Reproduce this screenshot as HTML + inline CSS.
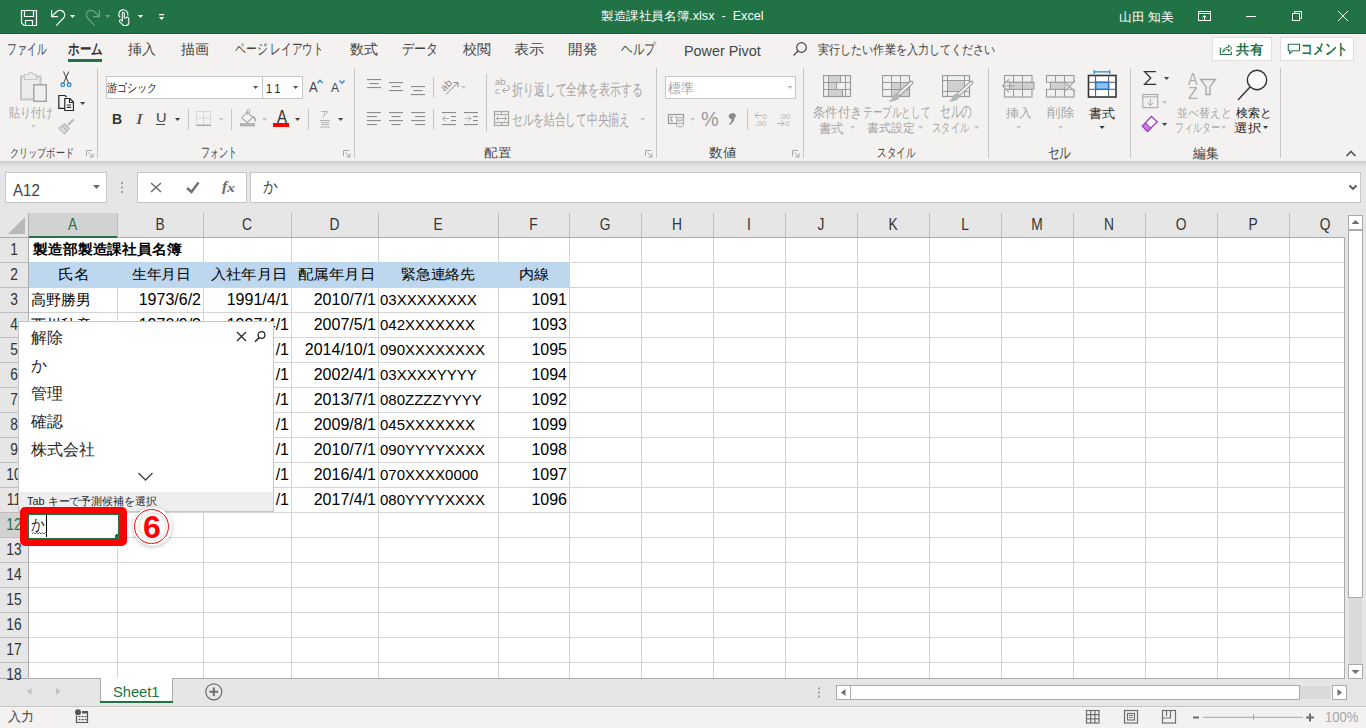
<!DOCTYPE html>
<html><head><meta charset="utf-8"><title>Excel</title>
<style>
html,body{margin:0;padding:0;}
body{width:1366px;height:728px;position:relative;overflow:hidden;background:#ffffff;font-family:"Liberation Sans", sans-serif;}
</style></head><body>
<div style="position:absolute;left:0px;top:0px;width:1366px;height:33px;background:#217346;"></div>
<div style="position:absolute;left:0px;top:33px;width:1366px;height:1px;background:#155c33;"></div>
<div style="position:absolute;left:0px;top:34px;width:1366px;height:1px;background:#fbfbfb;"></div>
<div style="position:absolute;left:0px;top:35px;width:1366px;height:126px;background:#f3f2f1;"></div>
<div style="position:absolute;left:0;top:161px;width:1366px;height:6px;background:linear-gradient(#cdcdcd,#e6e6e6)"></div>
<div style="position:absolute;left:0px;top:167px;width:1366px;height:46px;background:#e6e6e6;"></div>
<div style="position:absolute;left:0px;top:213px;width:1366px;height:24px;background:#e6e6e6;"></div>
<div style="position:absolute;left:0px;top:237px;width:28px;height:441px;background:#e6e6e6;"></div>
<div style="position:absolute;left:29px;top:238px;width:1315px;height:440px;background:#ffffff;"></div>
<div style="position:absolute;left:0px;top:678px;width:1366px;height:28px;background:#e6e6e6;"></div>
<div style="position:absolute;left:0px;top:707px;width:1366px;height:21px;background:#f3f2f1;"></div>
<div style="position:absolute;left:1345px;top:213px;width:21px;height:465px;background:#e6e6e6;"></div>
<div style="position:absolute;left:29px;top:213px;width:88px;height:24px;background:#d2d2d2;"></div>
<div style="position:absolute;left:0px;top:513px;width:28px;height:24px;background:#d2d2d2;"></div>
<div style="position:absolute;left:29px;top:262px;width:1315px;height:1px;background:#d4d4d4;"></div>
<div style="position:absolute;left:0px;top:262px;width:28px;height:1px;background:#bdbdbd;"></div>
<div style="position:absolute;left:29px;top:287px;width:1315px;height:1px;background:#d4d4d4;"></div>
<div style="position:absolute;left:0px;top:287px;width:28px;height:1px;background:#bdbdbd;"></div>
<div style="position:absolute;left:29px;top:312px;width:1315px;height:1px;background:#d4d4d4;"></div>
<div style="position:absolute;left:0px;top:312px;width:28px;height:1px;background:#bdbdbd;"></div>
<div style="position:absolute;left:29px;top:337px;width:1315px;height:1px;background:#d4d4d4;"></div>
<div style="position:absolute;left:0px;top:337px;width:28px;height:1px;background:#bdbdbd;"></div>
<div style="position:absolute;left:29px;top:362px;width:1315px;height:1px;background:#d4d4d4;"></div>
<div style="position:absolute;left:0px;top:362px;width:28px;height:1px;background:#bdbdbd;"></div>
<div style="position:absolute;left:29px;top:387px;width:1315px;height:1px;background:#d4d4d4;"></div>
<div style="position:absolute;left:0px;top:387px;width:28px;height:1px;background:#bdbdbd;"></div>
<div style="position:absolute;left:29px;top:412px;width:1315px;height:1px;background:#d4d4d4;"></div>
<div style="position:absolute;left:0px;top:412px;width:28px;height:1px;background:#bdbdbd;"></div>
<div style="position:absolute;left:29px;top:437px;width:1315px;height:1px;background:#d4d4d4;"></div>
<div style="position:absolute;left:0px;top:437px;width:28px;height:1px;background:#bdbdbd;"></div>
<div style="position:absolute;left:29px;top:462px;width:1315px;height:1px;background:#d4d4d4;"></div>
<div style="position:absolute;left:0px;top:462px;width:28px;height:1px;background:#bdbdbd;"></div>
<div style="position:absolute;left:29px;top:487px;width:1315px;height:1px;background:#d4d4d4;"></div>
<div style="position:absolute;left:0px;top:487px;width:28px;height:1px;background:#bdbdbd;"></div>
<div style="position:absolute;left:29px;top:512px;width:1315px;height:1px;background:#d4d4d4;"></div>
<div style="position:absolute;left:0px;top:512px;width:28px;height:1px;background:#bdbdbd;"></div>
<div style="position:absolute;left:29px;top:537px;width:1315px;height:1px;background:#d4d4d4;"></div>
<div style="position:absolute;left:0px;top:537px;width:28px;height:1px;background:#bdbdbd;"></div>
<div style="position:absolute;left:29px;top:562px;width:1315px;height:1px;background:#d4d4d4;"></div>
<div style="position:absolute;left:0px;top:562px;width:28px;height:1px;background:#bdbdbd;"></div>
<div style="position:absolute;left:29px;top:587px;width:1315px;height:1px;background:#d4d4d4;"></div>
<div style="position:absolute;left:0px;top:587px;width:28px;height:1px;background:#bdbdbd;"></div>
<div style="position:absolute;left:29px;top:612px;width:1315px;height:1px;background:#d4d4d4;"></div>
<div style="position:absolute;left:0px;top:612px;width:28px;height:1px;background:#bdbdbd;"></div>
<div style="position:absolute;left:29px;top:637px;width:1315px;height:1px;background:#d4d4d4;"></div>
<div style="position:absolute;left:0px;top:637px;width:28px;height:1px;background:#bdbdbd;"></div>
<div style="position:absolute;left:29px;top:662px;width:1315px;height:1px;background:#d4d4d4;"></div>
<div style="position:absolute;left:0px;top:662px;width:28px;height:1px;background:#bdbdbd;"></div>
<div style="position:absolute;left:117px;top:238px;width:1px;height:440px;background:#d4d4d4;"></div>
<div style="position:absolute;left:117px;top:213px;width:1px;height:24px;background:#bdbdbd;"></div>
<div style="position:absolute;left:203px;top:238px;width:1px;height:440px;background:#d4d4d4;"></div>
<div style="position:absolute;left:203px;top:213px;width:1px;height:24px;background:#bdbdbd;"></div>
<div style="position:absolute;left:291px;top:238px;width:1px;height:440px;background:#d4d4d4;"></div>
<div style="position:absolute;left:291px;top:213px;width:1px;height:24px;background:#bdbdbd;"></div>
<div style="position:absolute;left:378px;top:238px;width:1px;height:440px;background:#d4d4d4;"></div>
<div style="position:absolute;left:378px;top:213px;width:1px;height:24px;background:#bdbdbd;"></div>
<div style="position:absolute;left:498px;top:238px;width:1px;height:440px;background:#d4d4d4;"></div>
<div style="position:absolute;left:498px;top:213px;width:1px;height:24px;background:#bdbdbd;"></div>
<div style="position:absolute;left:569px;top:238px;width:1px;height:440px;background:#d4d4d4;"></div>
<div style="position:absolute;left:569px;top:213px;width:1px;height:24px;background:#bdbdbd;"></div>
<div style="position:absolute;left:641px;top:238px;width:1px;height:440px;background:#d4d4d4;"></div>
<div style="position:absolute;left:641px;top:213px;width:1px;height:24px;background:#bdbdbd;"></div>
<div style="position:absolute;left:713px;top:238px;width:1px;height:440px;background:#d4d4d4;"></div>
<div style="position:absolute;left:713px;top:213px;width:1px;height:24px;background:#bdbdbd;"></div>
<div style="position:absolute;left:785px;top:238px;width:1px;height:440px;background:#d4d4d4;"></div>
<div style="position:absolute;left:785px;top:213px;width:1px;height:24px;background:#bdbdbd;"></div>
<div style="position:absolute;left:857px;top:238px;width:1px;height:440px;background:#d4d4d4;"></div>
<div style="position:absolute;left:857px;top:213px;width:1px;height:24px;background:#bdbdbd;"></div>
<div style="position:absolute;left:929px;top:238px;width:1px;height:440px;background:#d4d4d4;"></div>
<div style="position:absolute;left:929px;top:213px;width:1px;height:24px;background:#bdbdbd;"></div>
<div style="position:absolute;left:1001px;top:238px;width:1px;height:440px;background:#d4d4d4;"></div>
<div style="position:absolute;left:1001px;top:213px;width:1px;height:24px;background:#bdbdbd;"></div>
<div style="position:absolute;left:1073px;top:238px;width:1px;height:440px;background:#d4d4d4;"></div>
<div style="position:absolute;left:1073px;top:213px;width:1px;height:24px;background:#bdbdbd;"></div>
<div style="position:absolute;left:1145px;top:238px;width:1px;height:440px;background:#d4d4d4;"></div>
<div style="position:absolute;left:1145px;top:213px;width:1px;height:24px;background:#bdbdbd;"></div>
<div style="position:absolute;left:1217px;top:238px;width:1px;height:440px;background:#d4d4d4;"></div>
<div style="position:absolute;left:1217px;top:213px;width:1px;height:24px;background:#bdbdbd;"></div>
<div style="position:absolute;left:1289px;top:238px;width:1px;height:440px;background:#d4d4d4;"></div>
<div style="position:absolute;left:1289px;top:213px;width:1px;height:24px;background:#bdbdbd;"></div>
<div style="position:absolute;left:1212px;top:37px;width:58px;height:22px;background:#ffffff;border:1px solid #e1dfdd;"></div>
<div style="position:absolute;left:1280px;top:37px;width:72px;height:22px;background:#ffffff;border:1px solid #e1dfdd;"></div>
<div style="position:absolute;left:97px;top:68px;width:1px;height:90px;background:#c8c6c4;"></div>
<div style="position:absolute;left:354px;top:68px;width:1px;height:90px;background:#c8c6c4;"></div>
<div style="position:absolute;left:656px;top:68px;width:1px;height:90px;background:#c8c6c4;"></div>
<div style="position:absolute;left:803px;top:68px;width:1px;height:90px;background:#c8c6c4;"></div>
<div style="position:absolute;left:988px;top:68px;width:1px;height:90px;background:#c8c6c4;"></div>
<div style="position:absolute;left:1130px;top:68px;width:1px;height:90px;background:#c8c6c4;"></div>
<div style="position:absolute;left:1280px;top:68px;width:1px;height:90px;background:#c8c6c4;"></div>
<div style="position:absolute;left:106px;top:76px;width:155px;height:21px;background:#ffffff;border:1px solid #c6c6c6;"></div>
<div style="position:absolute;left:262px;top:76px;width:39px;height:21px;background:#ffffff;border:1px solid #c6c6c6;"></div>
<div style="position:absolute;left:665px;top:76px;width:129px;height:21px;background:#ffffff;border:1px solid #c6c6c6;"></div>
<div style="position:absolute;left:5px;top:172px;width:100px;height:29px;background:#ffffff;border:1px solid #c6c6c6;"></div>
<div style="position:absolute;left:137px;top:172px;width:108px;height:29px;background:#ffffff;border:1px solid #c6c6c6;"></div>
<div style="position:absolute;left:250px;top:172px;width:1109px;height:29px;background:#ffffff;border:1px solid #c6c6c6;"></div>
<svg style="position:absolute;left:8px;top:217px" width="18" height="18" viewBox="0 0 18 18"><polygon points="17,0 17,17 0,17" fill="#b8b8b8"/></svg>
<div style="position:absolute;left:28px;top:213px;width:1px;height:465px;background:#ababab;"></div>
<div style="position:absolute;left:0px;top:237px;width:1344px;height:1px;background:#ababab;"></div>
<div style="position:absolute;left:1344px;top:237px;width:1px;height:441px;background:#ababab;"></div>
<div style="position:absolute;left:29px;top:262px;width:540px;height:25px;background:#bdd7ee;"></div>
<div style="position:absolute;left:0px;top:678px;width:1345px;height:1px;background:#ababab;"></div>
<div style="position:absolute;left:0px;top:706px;width:1366px;height:1px;background:#c6c6c6;"></div>
<div style="position:absolute;left:1348px;top:215px;width:13px;height:13px;background:#ffffff;border:1px solid #ababab;"></div>
<div style="position:absolute;left:1348px;top:230px;width:13px;height:366px;background:#ffffff;border:1px solid #ababab;"></div>
<div style="position:absolute;left:1349px;top:598px;width:13px;height:66px;background:#dadada;"></div>
<div style="position:absolute;left:1348px;top:664px;width:13px;height:13px;background:#ffffff;border:1px solid #ababab;"></div>
<div style="position:absolute;left:836px;top:685px;width:13px;height:13px;background:#ffffff;border:1px solid #ababab;"></div>
<div style="position:absolute;left:850px;top:685px;width:448px;height:13px;background:#ffffff;border:1px solid #ababab;"></div>
<div style="position:absolute;left:1300px;top:686px;width:30px;height:13px;background:#dadada;"></div>
<div style="position:absolute;left:1332px;top:685px;width:13px;height:13px;background:#ffffff;border:1px solid #ababab;"></div>
<div style="position:absolute;left:188px;top:109px;width:1px;height:21px;background:#c8c6c4;"></div>
<div style="position:absolute;left:231px;top:109px;width:1px;height:21px;background:#c8c6c4;"></div>
<div style="position:absolute;left:308px;top:109px;width:1px;height:21px;background:#c8c6c4;"></div>
<div style="position:absolute;left:433px;top:77px;width:1px;height:21px;background:#c8c6c4;"></div>
<div style="position:absolute;left:433px;top:109px;width:1px;height:21px;background:#c8c6c4;"></div>
<div style="position:absolute;left:486px;top:74px;width:1px;height:58px;background:#c8c6c4;"></div>
<div style="position:absolute;left:747px;top:109px;width:1px;height:21px;background:#c8c6c4;"></div>
<div style="position:absolute;left:117px;top:238px;width:86px;height:24px;background:#ffffff;"></div>
<div style="position:absolute;left:68px;top:59px;width:34px;height:3px;background:#217346;"></div>
<div style="position:absolute;left:29px;top:236px;width:88px;height:2px;background:#217346;"></div>
<div style="position:absolute;left:26px;top:513px;width:2px;height:24px;background:#217346;"></div>
<div style="position:absolute;left:31px;top:287px;height:25px;line-height:26px;font-size:15px;color:#000;white-space:pre;font-family:'Liberation Sans', sans-serif">高野勝男</div>
<div style="position:absolute;left:117px;top:287px;width:84px;height:25px;line-height:26px;text-align:right;font-size:16px;color:#000;white-space:pre;font-family:'Liberation Sans', sans-serif">1973/6/2</div>
<div style="position:absolute;left:203px;top:287px;width:86px;height:25px;line-height:26px;text-align:right;font-size:16px;color:#000;white-space:pre;font-family:'Liberation Sans', sans-serif">1991/4/1</div>
<div style="position:absolute;left:291px;top:287px;width:85px;height:25px;line-height:26px;text-align:right;font-size:16px;color:#000;white-space:pre;font-family:'Liberation Sans', sans-serif">2010/7/1</div>
<div style="position:absolute;left:380px;top:287px;height:25px;line-height:26px;font-size:15px;color:#000;white-space:pre;font-family:'Liberation Sans', sans-serif">03XXXXXXXX</div>
<div style="position:absolute;left:498px;top:287px;width:69px;height:25px;line-height:26px;text-align:right;font-size:16px;color:#000;white-space:pre;font-family:'Liberation Sans', sans-serif">1091</div>
<div style="position:absolute;left:31px;top:312px;height:25px;line-height:26px;font-size:15px;color:#000;white-space:pre;font-family:'Liberation Sans', sans-serif">西川秋彦</div>
<div style="position:absolute;left:117px;top:312px;width:84px;height:25px;line-height:26px;text-align:right;font-size:16px;color:#000;white-space:pre;font-family:'Liberation Sans', sans-serif">1970/9/3</div>
<div style="position:absolute;left:203px;top:312px;width:86px;height:25px;line-height:26px;text-align:right;font-size:16px;color:#000;white-space:pre;font-family:'Liberation Sans', sans-serif">1997/4/1</div>
<div style="position:absolute;left:291px;top:312px;width:85px;height:25px;line-height:26px;text-align:right;font-size:16px;color:#000;white-space:pre;font-family:'Liberation Sans', sans-serif">2007/5/1</div>
<div style="position:absolute;left:380px;top:312px;height:25px;line-height:26px;font-size:15px;color:#000;white-space:pre;font-family:'Liberation Sans', sans-serif">042XXXXXXX</div>
<div style="position:absolute;left:498px;top:312px;width:69px;height:25px;line-height:26px;text-align:right;font-size:16px;color:#000;white-space:pre;font-family:'Liberation Sans', sans-serif">1093</div>
<div style="position:absolute;left:203px;top:337px;width:86px;height:25px;line-height:26px;text-align:right;font-size:16px;color:#000;white-space:pre;font-family:'Liberation Sans', sans-serif">/1</div>
<div style="position:absolute;left:291px;top:337px;width:85px;height:25px;line-height:26px;text-align:right;font-size:16px;color:#000;white-space:pre;font-family:'Liberation Sans', sans-serif">2014/10/1</div>
<div style="position:absolute;left:380px;top:337px;height:25px;line-height:26px;font-size:15px;color:#000;white-space:pre;font-family:'Liberation Sans', sans-serif">090XXXXXXXX</div>
<div style="position:absolute;left:498px;top:337px;width:69px;height:25px;line-height:26px;text-align:right;font-size:16px;color:#000;white-space:pre;font-family:'Liberation Sans', sans-serif">1095</div>
<div style="position:absolute;left:203px;top:362px;width:86px;height:25px;line-height:26px;text-align:right;font-size:16px;color:#000;white-space:pre;font-family:'Liberation Sans', sans-serif">/1</div>
<div style="position:absolute;left:291px;top:362px;width:85px;height:25px;line-height:26px;text-align:right;font-size:16px;color:#000;white-space:pre;font-family:'Liberation Sans', sans-serif">2002/4/1</div>
<div style="position:absolute;left:380px;top:362px;height:25px;line-height:26px;font-size:15px;color:#000;white-space:pre;font-family:'Liberation Sans', sans-serif">03XXXXYYYY</div>
<div style="position:absolute;left:498px;top:362px;width:69px;height:25px;line-height:26px;text-align:right;font-size:16px;color:#000;white-space:pre;font-family:'Liberation Sans', sans-serif">1094</div>
<div style="position:absolute;left:203px;top:387px;width:86px;height:25px;line-height:26px;text-align:right;font-size:16px;color:#000;white-space:pre;font-family:'Liberation Sans', sans-serif">/1</div>
<div style="position:absolute;left:291px;top:387px;width:85px;height:25px;line-height:26px;text-align:right;font-size:16px;color:#000;white-space:pre;font-family:'Liberation Sans', sans-serif">2013/7/1</div>
<div style="position:absolute;left:380px;top:387px;height:25px;line-height:26px;font-size:15px;color:#000;white-space:pre;font-family:'Liberation Sans', sans-serif">080ZZZZYYYY</div>
<div style="position:absolute;left:498px;top:387px;width:69px;height:25px;line-height:26px;text-align:right;font-size:16px;color:#000;white-space:pre;font-family:'Liberation Sans', sans-serif">1092</div>
<div style="position:absolute;left:203px;top:412px;width:86px;height:25px;line-height:26px;text-align:right;font-size:16px;color:#000;white-space:pre;font-family:'Liberation Sans', sans-serif">/1</div>
<div style="position:absolute;left:291px;top:412px;width:85px;height:25px;line-height:26px;text-align:right;font-size:16px;color:#000;white-space:pre;font-family:'Liberation Sans', sans-serif">2009/8/1</div>
<div style="position:absolute;left:380px;top:412px;height:25px;line-height:26px;font-size:15px;color:#000;white-space:pre;font-family:'Liberation Sans', sans-serif">045XXXXXXX</div>
<div style="position:absolute;left:498px;top:412px;width:69px;height:25px;line-height:26px;text-align:right;font-size:16px;color:#000;white-space:pre;font-family:'Liberation Sans', sans-serif">1099</div>
<div style="position:absolute;left:203px;top:437px;width:86px;height:25px;line-height:26px;text-align:right;font-size:16px;color:#000;white-space:pre;font-family:'Liberation Sans', sans-serif">/1</div>
<div style="position:absolute;left:291px;top:437px;width:85px;height:25px;line-height:26px;text-align:right;font-size:16px;color:#000;white-space:pre;font-family:'Liberation Sans', sans-serif">2010/7/1</div>
<div style="position:absolute;left:380px;top:437px;height:25px;line-height:26px;font-size:15px;color:#000;white-space:pre;font-family:'Liberation Sans', sans-serif">090YYYYXXXX</div>
<div style="position:absolute;left:498px;top:437px;width:69px;height:25px;line-height:26px;text-align:right;font-size:16px;color:#000;white-space:pre;font-family:'Liberation Sans', sans-serif">1098</div>
<div style="position:absolute;left:203px;top:462px;width:86px;height:25px;line-height:26px;text-align:right;font-size:16px;color:#000;white-space:pre;font-family:'Liberation Sans', sans-serif">/1</div>
<div style="position:absolute;left:291px;top:462px;width:85px;height:25px;line-height:26px;text-align:right;font-size:16px;color:#000;white-space:pre;font-family:'Liberation Sans', sans-serif">2016/4/1</div>
<div style="position:absolute;left:380px;top:462px;height:25px;line-height:26px;font-size:15px;color:#000;white-space:pre;font-family:'Liberation Sans', sans-serif">070XXXX0000</div>
<div style="position:absolute;left:498px;top:462px;width:69px;height:25px;line-height:26px;text-align:right;font-size:16px;color:#000;white-space:pre;font-family:'Liberation Sans', sans-serif">1097</div>
<div style="position:absolute;left:203px;top:487px;width:86px;height:25px;line-height:26px;text-align:right;font-size:16px;color:#000;white-space:pre;font-family:'Liberation Sans', sans-serif">/1</div>
<div style="position:absolute;left:291px;top:487px;width:85px;height:25px;line-height:26px;text-align:right;font-size:16px;color:#000;white-space:pre;font-family:'Liberation Sans', sans-serif">2017/4/1</div>
<div style="position:absolute;left:380px;top:487px;height:25px;line-height:26px;font-size:15px;color:#000;white-space:pre;font-family:'Liberation Sans', sans-serif">080YYYYXXXX</div>
<div style="position:absolute;left:498px;top:487px;width:69px;height:25px;line-height:26px;text-align:right;font-size:16px;color:#000;white-space:pre;font-family:'Liberation Sans', sans-serif">1096</div>
<div style="position:absolute;left:100px;top:678px;width:71px;height:23px;background:#fff;border-left:1px solid #ababab;border-right:1px solid #ababab"></div>
<div style="position:absolute;left:28px;top:213px;width:89px;height:24px;line-height:23px;text-align:center;font-size:16px;color:#217346;font-family:'Liberation Sans', sans-serif;transform:scaleX(0.86)">A</div>
<div style="position:absolute;left:117px;top:213px;width:86px;height:24px;line-height:23px;text-align:center;font-size:16px;color:#333333;font-family:'Liberation Sans', sans-serif;transform:scaleX(0.86)">B</div>
<div style="position:absolute;left:203px;top:213px;width:88px;height:24px;line-height:23px;text-align:center;font-size:16px;color:#333333;font-family:'Liberation Sans', sans-serif;transform:scaleX(0.86)">C</div>
<div style="position:absolute;left:291px;top:213px;width:87px;height:24px;line-height:23px;text-align:center;font-size:16px;color:#333333;font-family:'Liberation Sans', sans-serif;transform:scaleX(0.86)">D</div>
<div style="position:absolute;left:378px;top:213px;width:120px;height:24px;line-height:23px;text-align:center;font-size:16px;color:#333333;font-family:'Liberation Sans', sans-serif;transform:scaleX(0.86)">E</div>
<div style="position:absolute;left:498px;top:213px;width:71px;height:24px;line-height:23px;text-align:center;font-size:16px;color:#333333;font-family:'Liberation Sans', sans-serif;transform:scaleX(0.86)">F</div>
<div style="position:absolute;left:569px;top:213px;width:72px;height:24px;line-height:23px;text-align:center;font-size:16px;color:#333333;font-family:'Liberation Sans', sans-serif;transform:scaleX(0.86)">G</div>
<div style="position:absolute;left:641px;top:213px;width:72px;height:24px;line-height:23px;text-align:center;font-size:16px;color:#333333;font-family:'Liberation Sans', sans-serif;transform:scaleX(0.86)">H</div>
<div style="position:absolute;left:713px;top:213px;width:72px;height:24px;line-height:23px;text-align:center;font-size:16px;color:#333333;font-family:'Liberation Sans', sans-serif;transform:scaleX(0.86)">I</div>
<div style="position:absolute;left:785px;top:213px;width:72px;height:24px;line-height:23px;text-align:center;font-size:16px;color:#333333;font-family:'Liberation Sans', sans-serif;transform:scaleX(0.86)">J</div>
<div style="position:absolute;left:857px;top:213px;width:72px;height:24px;line-height:23px;text-align:center;font-size:16px;color:#333333;font-family:'Liberation Sans', sans-serif;transform:scaleX(0.86)">K</div>
<div style="position:absolute;left:929px;top:213px;width:72px;height:24px;line-height:23px;text-align:center;font-size:16px;color:#333333;font-family:'Liberation Sans', sans-serif;transform:scaleX(0.86)">L</div>
<div style="position:absolute;left:1001px;top:213px;width:72px;height:24px;line-height:23px;text-align:center;font-size:16px;color:#333333;font-family:'Liberation Sans', sans-serif;transform:scaleX(0.86)">M</div>
<div style="position:absolute;left:1073px;top:213px;width:72px;height:24px;line-height:23px;text-align:center;font-size:16px;color:#333333;font-family:'Liberation Sans', sans-serif;transform:scaleX(0.86)">N</div>
<div style="position:absolute;left:1145px;top:213px;width:72px;height:24px;line-height:23px;text-align:center;font-size:16px;color:#333333;font-family:'Liberation Sans', sans-serif;transform:scaleX(0.86)">O</div>
<div style="position:absolute;left:1217px;top:213px;width:72px;height:24px;line-height:23px;text-align:center;font-size:16px;color:#333333;font-family:'Liberation Sans', sans-serif;transform:scaleX(0.86)">P</div>
<div style="position:absolute;left:1289px;top:213px;width:72px;height:24px;line-height:23px;text-align:center;font-size:16px;color:#333333;font-family:'Liberation Sans', sans-serif;transform:scaleX(0.86)">Q</div>
<div style="position:absolute;left:0px;top:237px;width:28px;height:25px;line-height:26px;text-align:center;font-size:16px;color:#333333;font-family:'Liberation Sans', sans-serif;transform:scaleX(0.86)">1</div>
<div style="position:absolute;left:0px;top:262px;width:28px;height:25px;line-height:26px;text-align:center;font-size:16px;color:#333333;font-family:'Liberation Sans', sans-serif;transform:scaleX(0.86)">2</div>
<div style="position:absolute;left:0px;top:287px;width:28px;height:25px;line-height:26px;text-align:center;font-size:16px;color:#333333;font-family:'Liberation Sans', sans-serif;transform:scaleX(0.86)">3</div>
<div style="position:absolute;left:0px;top:312px;width:28px;height:25px;line-height:26px;text-align:center;font-size:16px;color:#333333;font-family:'Liberation Sans', sans-serif;transform:scaleX(0.86)">4</div>
<div style="position:absolute;left:0px;top:337px;width:28px;height:25px;line-height:26px;text-align:center;font-size:16px;color:#333333;font-family:'Liberation Sans', sans-serif;transform:scaleX(0.86)">5</div>
<div style="position:absolute;left:0px;top:362px;width:28px;height:25px;line-height:26px;text-align:center;font-size:16px;color:#333333;font-family:'Liberation Sans', sans-serif;transform:scaleX(0.86)">6</div>
<div style="position:absolute;left:0px;top:387px;width:28px;height:25px;line-height:26px;text-align:center;font-size:16px;color:#333333;font-family:'Liberation Sans', sans-serif;transform:scaleX(0.86)">7</div>
<div style="position:absolute;left:0px;top:412px;width:28px;height:25px;line-height:26px;text-align:center;font-size:16px;color:#333333;font-family:'Liberation Sans', sans-serif;transform:scaleX(0.86)">8</div>
<div style="position:absolute;left:0px;top:437px;width:28px;height:25px;line-height:26px;text-align:center;font-size:16px;color:#333333;font-family:'Liberation Sans', sans-serif;transform:scaleX(0.86)">9</div>
<div style="position:absolute;left:0px;top:462px;width:28px;height:25px;line-height:26px;text-align:center;font-size:16px;color:#333333;font-family:'Liberation Sans', sans-serif;transform:scaleX(0.86)">10</div>
<div style="position:absolute;left:0px;top:487px;width:28px;height:25px;line-height:26px;text-align:center;font-size:16px;color:#333333;font-family:'Liberation Sans', sans-serif;transform:scaleX(0.86)">11</div>
<div style="position:absolute;left:0px;top:512px;width:28px;height:25px;line-height:26px;text-align:center;font-size:16px;color:#217346;font-family:'Liberation Sans', sans-serif;transform:scaleX(0.86)">12</div>
<div style="position:absolute;left:0px;top:537px;width:28px;height:25px;line-height:26px;text-align:center;font-size:16px;color:#333333;font-family:'Liberation Sans', sans-serif;transform:scaleX(0.86)">13</div>
<div style="position:absolute;left:0px;top:562px;width:28px;height:25px;line-height:26px;text-align:center;font-size:16px;color:#333333;font-family:'Liberation Sans', sans-serif;transform:scaleX(0.86)">14</div>
<div style="position:absolute;left:0px;top:587px;width:28px;height:25px;line-height:26px;text-align:center;font-size:16px;color:#333333;font-family:'Liberation Sans', sans-serif;transform:scaleX(0.86)">15</div>
<div style="position:absolute;left:0px;top:612px;width:28px;height:25px;line-height:26px;text-align:center;font-size:16px;color:#333333;font-family:'Liberation Sans', sans-serif;transform:scaleX(0.86)">16</div>
<div style="position:absolute;left:0px;top:637px;width:28px;height:25px;line-height:26px;text-align:center;font-size:16px;color:#333333;font-family:'Liberation Sans', sans-serif;transform:scaleX(0.86)">17</div>
<div style="position:absolute;left:0px;top:662px;width:28px;height:25px;line-height:26px;text-align:center;font-size:16px;color:#333333;font-family:'Liberation Sans', sans-serif;transform:scaleX(0.86)">18</div>
<div style="position:absolute;left:100px;top:701px;width:73px;height:2px;background:#217346;"></div>
<div style="position:absolute;left:156px;top:124px;width:9px;height:1px;background:#444;"></div>
<div style="position:absolute;left:273px;top:123px;width:16px;height:4px;background:#ff0000;"></div>
<div style="position:absolute;left:601.03px;top:10.00px;white-space:pre;font-family:'Liberation Sans', sans-serif;font-size:13px;font-weight:400;font-style:normal;line-height:1;letter-spacing:0px;color:#ffffff;transform-origin:0 0;transform:scale(0.9699,0.9231)">製造課社員名簿.xlsx  -  Excel</div>
<div style="position:absolute;left:1119.02px;top:11.00px;white-space:pre;font-family:'Liberation Sans', sans-serif;font-size:13px;font-weight:400;font-style:normal;line-height:1;letter-spacing:0px;color:#ffffff;transform-origin:0 0;transform:scale(0.9815,0.9231)">山田 知美</div>
<div style="position:absolute;left:6.59px;top:40.83px;white-space:pre;font-family:'Liberation Sans', sans-serif;font-size:14px;font-weight:400;font-style:normal;line-height:1;letter-spacing:0px;color:#444444;transform-origin:0 0;transform:scale(0.7037,1.0833)">ファイル</div>
<div style="position:absolute;left:68.00px;top:40.83px;white-space:pre;font-family:'Liberation Sans', sans-serif;font-size:14px;font-weight:700;font-style:normal;line-height:1;letter-spacing:0px;color:#333333;transform-origin:0 0;transform:scale(0.8293,1.0833)">ホーム</div>
<div style="position:absolute;left:128.00px;top:42.00px;white-space:pre;font-family:'Liberation Sans', sans-serif;font-size:14px;font-weight:400;font-style:normal;line-height:1;letter-spacing:0px;color:#444444;transform-origin:0 0;transform:scale(1.0000,1.0000)">挿入</div>
<div style="position:absolute;left:181.00px;top:42.00px;white-space:pre;font-family:'Liberation Sans', sans-serif;font-size:14px;font-weight:400;font-style:normal;line-height:1;letter-spacing:0px;color:#444444;transform-origin:0 0;transform:scale(1.0000,1.0000)">描画</div>
<div style="position:absolute;left:235.23px;top:40.83px;white-space:pre;font-family:'Liberation Sans', sans-serif;font-size:14px;font-weight:400;font-style:normal;line-height:1;letter-spacing:0px;color:#444444;transform-origin:0 0;transform:scale(0.7679,1.0833)">ページ レイアウト</div>
<div style="position:absolute;left:350.00px;top:42.00px;white-space:pre;font-family:'Liberation Sans', sans-serif;font-size:14px;font-weight:400;font-style:normal;line-height:1;letter-spacing:0px;color:#444444;transform-origin:0 0;transform:scale(1.0000,1.0000)">数式</div>
<div style="position:absolute;left:402.13px;top:40.83px;white-space:pre;font-family:'Liberation Sans', sans-serif;font-size:14px;font-weight:400;font-style:normal;line-height:1;letter-spacing:0px;color:#444444;transform-origin:0 0;transform:scale(0.8718,1.0833)">データ</div>
<div style="position:absolute;left:463.00px;top:42.00px;white-space:pre;font-family:'Liberation Sans', sans-serif;font-size:14px;font-weight:400;font-style:normal;line-height:1;letter-spacing:0px;color:#444444;transform-origin:0 0;transform:scale(1.0000,1.0000)">校閲</div>
<div style="position:absolute;left:513.92px;top:42.00px;white-space:pre;font-family:'Liberation Sans', sans-serif;font-size:14px;font-weight:400;font-style:normal;line-height:1;letter-spacing:0px;color:#444444;transform-origin:0 0;transform:scale(1.0769,1.0000)">表示</div>
<div style="position:absolute;left:567.96px;top:42.00px;white-space:pre;font-family:'Liberation Sans', sans-serif;font-size:14px;font-weight:400;font-style:normal;line-height:1;letter-spacing:0px;color:#444444;transform-origin:0 0;transform:scale(1.0385,1.0000)">開発</div>
<div style="position:absolute;left:621.00px;top:40.83px;white-space:pre;font-family:'Liberation Sans', sans-serif;font-size:14px;font-weight:400;font-style:normal;line-height:1;letter-spacing:0px;color:#444444;transform-origin:0 0;transform:scale(0.8333,1.0833)">ヘルプ</div>
<div style="position:absolute;left:683.97px;top:42.91px;white-space:pre;font-family:'Liberation Sans', sans-serif;font-size:14px;font-weight:400;font-style:normal;line-height:1;letter-spacing:0px;color:#444444;transform-origin:0 0;transform:scale(1.0270,1.0909)">Power Pivot</div>
<div style="position:absolute;left:818.21px;top:43.00px;white-space:pre;font-family:'Liberation Sans', sans-serif;font-size:14px;font-weight:400;font-style:normal;line-height:1;letter-spacing:0px;color:#444444;transform-origin:0 0;transform:scale(0.7928,0.9286)">実行したい作業を入力してください</div>
<div style="position:absolute;left:1236.00px;top:43.00px;white-space:pre;font-family:'Liberation Sans', sans-serif;font-size:14px;font-weight:700;font-style:normal;line-height:1;letter-spacing:0px;color:#217346;transform-origin:0 0;transform:scale(0.9643,0.9286)">共有</div>
<div style="position:absolute;left:1301.31px;top:40.83px;white-space:pre;font-family:'Liberation Sans', sans-serif;font-size:14px;font-weight:700;font-style:normal;line-height:1;letter-spacing:0px;color:#217346;transform-origin:0 0;transform:scale(0.8431,1.0833)">コメント</div>
<div style="position:absolute;left:9.60px;top:147.00px;white-space:pre;font-family:'Liberation Sans', sans-serif;font-size:13px;font-weight:400;font-style:normal;line-height:1;letter-spacing:0px;color:#444444;transform-origin:0 0;transform:scale(0.7011,0.9231)">クリップボード</div>
<div style="position:absolute;left:200.60px;top:144.82px;white-space:pre;font-family:'Liberation Sans', sans-serif;font-size:13px;font-weight:400;font-style:normal;line-height:1;letter-spacing:0px;color:#444444;transform-origin:0 0;transform:scale(0.7021,1.0909)">フォント</div>
<div style="position:absolute;left:483.96px;top:147.00px;white-space:pre;font-family:'Liberation Sans', sans-serif;font-size:13px;font-weight:400;font-style:normal;line-height:1;letter-spacing:0px;color:#444444;transform-origin:0 0;transform:scale(1.0417,0.9231)">配置</div>
<div style="position:absolute;left:708.96px;top:146.00px;white-space:pre;font-family:'Liberation Sans', sans-serif;font-size:13px;font-weight:400;font-style:normal;line-height:1;letter-spacing:0px;color:#444444;transform-origin:0 0;transform:scale(1.0417,1.0000)">数値</div>
<div style="position:absolute;left:876.53px;top:146.00px;white-space:pre;font-family:'Liberation Sans', sans-serif;font-size:13px;font-weight:400;font-style:normal;line-height:1;letter-spacing:0px;color:#444444;transform-origin:0 0;transform:scale(0.7347,1.0000)">スタイル</div>
<div style="position:absolute;left:1048.12px;top:144.60px;white-space:pre;font-family:'Liberation Sans', sans-serif;font-size:13px;font-weight:400;font-style:normal;line-height:1;letter-spacing:0px;color:#444444;transform-origin:0 0;transform:scale(0.8750,1.2000)">セル</div>
<div style="position:absolute;left:1193.00px;top:145.91px;white-space:pre;font-family:'Liberation Sans', sans-serif;font-size:13px;font-weight:400;font-style:normal;line-height:1;letter-spacing:0px;color:#444444;transform-origin:0 0;transform:scale(1.0000,1.0909)">編集</div>
<div style="position:absolute;left:9.16px;top:106.00px;white-space:pre;font-family:'Liberation Sans', sans-serif;font-size:13px;font-weight:400;font-style:normal;line-height:1;letter-spacing:0px;color:#a6a6a6;transform-origin:0 0;transform:scale(0.8400,1.0000)">貼り付け</div>
<div style="position:absolute;left:107.23px;top:82.08px;white-space:pre;font-family:'Liberation Sans', sans-serif;font-size:13px;font-weight:400;font-style:normal;line-height:1;letter-spacing:0px;color:#262626;transform-origin:0 0;transform:scale(0.7742,0.9167)">游ゴシック</div>
<div style="position:absolute;left:266.07px;top:81.89px;white-space:pre;font-family:'Liberation Sans', sans-serif;font-size:12px;font-weight:400;font-style:normal;line-height:1;letter-spacing:3px;color:#262626;transform-origin:0 0;transform:scale(0.9286,1.1111)">11</div>
<div style="position:absolute;left:512.16px;top:81.00px;white-space:pre;font-family:'Liberation Sans', sans-serif;font-size:13px;font-weight:400;font-style:normal;line-height:1;letter-spacing:0px;color:#a6a6a6;transform-origin:0 0;transform:scale(0.8366,1.2308)">折り返して全体を表示する</div>
<div style="position:absolute;left:512.18px;top:111.00px;white-space:pre;font-family:'Liberation Sans', sans-serif;font-size:13px;font-weight:400;font-style:normal;line-height:1;letter-spacing:0px;color:#a6a6a6;transform-origin:0 0;transform:scale(0.8227,1.2308)">セルを結合して中央揃え</div>
<div style="position:absolute;left:668.00px;top:80.91px;white-space:pre;font-family:'Liberation Sans', sans-serif;font-size:13px;font-weight:400;font-style:normal;line-height:1;letter-spacing:0px;color:#a6a6a6;transform-origin:0 0;transform:scale(1.0000,1.0909)">標準</div>
<div style="position:absolute;left:813.04px;top:104.92px;white-space:pre;font-family:'Liberation Sans', sans-serif;font-size:13px;font-weight:400;font-style:normal;line-height:1;letter-spacing:0px;color:#a6a6a6;transform-origin:0 0;transform:scale(0.9583,1.0833)">条件付き</div>
<div style="position:absolute;left:819.04px;top:122.00px;white-space:pre;font-family:'Liberation Sans', sans-serif;font-size:13px;font-weight:400;font-style:normal;line-height:1;letter-spacing:0px;color:#a6a6a6;transform-origin:0 0;transform:scale(0.9600,1.0000)">書式</div>
<div style="position:absolute;left:863.26px;top:104.92px;white-space:pre;font-family:'Liberation Sans', sans-serif;font-size:13px;font-weight:400;font-style:normal;line-height:1;letter-spacing:0px;color:#a6a6a6;transform-origin:0 0;transform:scale(0.7386,1.0833)">テーブルとして</div>
<div style="position:absolute;left:867.08px;top:122.00px;white-space:pre;font-family:'Liberation Sans', sans-serif;font-size:13px;font-weight:400;font-style:normal;line-height:1;letter-spacing:0px;color:#a6a6a6;transform-origin:0 0;transform:scale(0.9200,0.9231)">書式設定</div>
<div style="position:absolute;left:940.18px;top:103.40px;white-space:pre;font-family:'Liberation Sans', sans-serif;font-size:13px;font-weight:400;font-style:normal;line-height:1;letter-spacing:0px;color:#a6a6a6;transform-origin:0 0;transform:scale(0.8158,1.3000)">セルの</div>
<div style="position:absolute;left:931.57px;top:121.00px;white-space:pre;font-family:'Liberation Sans', sans-serif;font-size:13px;font-weight:400;font-style:normal;line-height:1;letter-spacing:0px;color:#a6a6a6;transform-origin:0 0;transform:scale(0.7143,1.0000)">スタイル</div>
<div style="position:absolute;left:1006.00px;top:107.00px;white-space:pre;font-family:'Liberation Sans', sans-serif;font-size:13px;font-weight:400;font-style:normal;line-height:1;letter-spacing:0px;color:#a6a6a6;transform-origin:0 0;transform:scale(1.0000,0.9231)">挿入</div>
<div style="position:absolute;left:1046.96px;top:106.00px;white-space:pre;font-family:'Liberation Sans', sans-serif;font-size:13px;font-weight:400;font-style:normal;line-height:1;letter-spacing:0px;color:#a6a6a6;transform-origin:0 0;transform:scale(1.0417,1.0000)">削除</div>
<div style="position:absolute;left:1089.00px;top:107.00px;white-space:pre;font-family:'Liberation Sans', sans-serif;font-size:13px;font-weight:400;font-style:normal;line-height:1;letter-spacing:0px;color:#262626;transform-origin:0 0;transform:scale(1.0000,1.0000)">書式</div>
<div style="position:absolute;left:1177.00px;top:107.00px;white-space:pre;font-family:'Liberation Sans', sans-serif;font-size:13px;font-weight:400;font-style:normal;line-height:1;letter-spacing:0px;color:#a6a6a6;transform-origin:0 0;transform:scale(0.8387,0.9231)">並べ替えと</div>
<div style="position:absolute;left:1174.61px;top:121.00px;white-space:pre;font-family:'Liberation Sans', sans-serif;font-size:13px;font-weight:400;font-style:normal;line-height:1;letter-spacing:0px;color:#a6a6a6;transform-origin:0 0;transform:scale(0.6935,1.0000)">フィルター</div>
<div style="position:absolute;left:1236.00px;top:107.00px;white-space:pre;font-family:'Liberation Sans', sans-serif;font-size:13px;font-weight:400;font-style:normal;line-height:1;letter-spacing:0px;color:#262626;transform-origin:0 0;transform:scale(0.9167,0.9231)">検索と</div>
<div style="position:absolute;left:1233.96px;top:122.00px;white-space:pre;font-family:'Liberation Sans', sans-serif;font-size:13px;font-weight:400;font-style:normal;line-height:1;letter-spacing:0px;color:#262626;transform-origin:0 0;transform:scale(1.0417,0.9231)">選択</div>
<div style="position:absolute;left:13.00px;top:181.60px;white-space:pre;font-family:'Liberation Sans', sans-serif;font-size:14px;font-weight:400;font-style:normal;line-height:1;letter-spacing:0px;color:#444444;transform-origin:0 0;transform:scale(1.0833,1.2000)">A12</div>
<div style="position:absolute;left:262.92px;top:177.67px;white-space:pre;font-family:'Liberation Sans', sans-serif;font-size:14px;font-weight:400;font-style:normal;line-height:1;letter-spacing:0px;color:#444444;transform-origin:0 0;transform:scale(1.0769,1.1667)">か</div>
<div style="position:absolute;left:33.00px;top:242.00px;white-space:pre;font-family:'Liberation Sans', sans-serif;font-size:15px;font-weight:700;font-style:normal;line-height:1;letter-spacing:0px;color:#000000;transform-origin:0 0;transform:scale(0.9933,0.9375)">製造部製造課社員名簿</div>
<div style="position:absolute;left:57.96px;top:267.07px;white-space:pre;font-family:'Liberation Sans', sans-serif;font-size:15px;font-weight:400;font-style:normal;line-height:1;letter-spacing:0px;color:#000000;transform-origin:0 0;transform:scale(1.0370,0.9286)">氏名</div>
<div style="position:absolute;left:132.00px;top:267.07px;white-space:pre;font-family:'Liberation Sans', sans-serif;font-size:15px;font-weight:400;font-style:normal;line-height:1;letter-spacing:0px;color:#000000;transform-origin:0 0;transform:scale(0.9828,0.9286)">生年月日</div>
<div style="position:absolute;left:211.00px;top:267.07px;white-space:pre;font-family:'Liberation Sans', sans-serif;font-size:15px;font-weight:400;font-style:normal;line-height:1;letter-spacing:0px;color:#000000;transform-origin:0 0;transform:scale(1.0137,0.9286)">入社年月日</div>
<div style="position:absolute;left:297.97px;top:267.07px;white-space:pre;font-family:'Liberation Sans', sans-serif;font-size:15px;font-weight:400;font-style:normal;line-height:1;letter-spacing:0px;color:#000000;transform-origin:0 0;transform:scale(1.0278,0.9286)">配属年月日</div>
<div style="position:absolute;left:401.01px;top:267.07px;white-space:pre;font-family:'Liberation Sans', sans-serif;font-size:15px;font-weight:400;font-style:normal;line-height:1;letter-spacing:0px;color:#000000;transform-origin:0 0;transform:scale(0.9865,0.9286)">緊急連絡先</div>
<div style="position:absolute;left:519.00px;top:267.07px;white-space:pre;font-family:'Liberation Sans', sans-serif;font-size:15px;font-weight:400;font-style:normal;line-height:1;letter-spacing:0px;color:#000000;transform-origin:0 0;transform:scale(1.0000,0.9286)">内線</div>
<div style="position:absolute;left:112.95px;top:685.00px;white-space:pre;font-family:'Liberation Sans', sans-serif;font-size:14px;font-weight:400;font-style:normal;line-height:1;letter-spacing:0px;color:#217346;transform-origin:0 0;transform:scale(1.0465,1.0000)">Sheet1</div>
<div style="position:absolute;left:8.00px;top:710.00px;white-space:pre;font-family:'Liberation Sans', sans-serif;font-size:13px;font-weight:400;font-style:normal;line-height:1;letter-spacing:0px;color:#444444;transform-origin:0 0;transform:scale(1.0000,1.0000)">入力</div>
<div style="position:absolute;left:1325.00px;top:709.78px;white-space:pre;font-family:'Liberation Sans', sans-serif;font-size:13px;font-weight:400;font-style:normal;line-height:1;letter-spacing:0px;color:#a6a6a6;transform-origin:0 0;transform:scale(1.0000,1.1111)">100%</div>
<div style="position:absolute;left:309.00px;top:79.78px;white-space:pre;font-family:'Liberation Sans', sans-serif;font-size:13px;font-weight:400;font-style:normal;line-height:1;letter-spacing:0px;color:#444;transform-origin:0 0;transform:scale(1.0000,1.1111)">A</div>
<div style="position:absolute;left:331.00px;top:82.00px;white-space:pre;font-family:'Liberation Sans', sans-serif;font-size:12px;font-weight:400;font-style:normal;line-height:1;letter-spacing:0px;color:#444;transform-origin:0 0;transform:scale(1.0000,1.0000)">A</div>
<div style="position:absolute;left:112.00px;top:110.80px;white-space:pre;font-family:'Liberation Sans', sans-serif;font-size:14px;font-weight:700;font-style:normal;line-height:1;letter-spacing:0px;color:#333;transform-origin:0 0;transform:scale(1.0000,1.1000)">B</div>
<div style="position:absolute;left:136.00px;top:111.90px;white-space:pre;font-family:'Liberation Serif', serif;font-size:14px;font-weight:400;font-style:italic;line-height:1;letter-spacing:0px;color:#444;transform-origin:0 0;transform:scale(1.4000,1.1000)">I</div>
<div style="position:absolute;left:155.88px;top:111.00px;white-space:pre;font-family:'Liberation Sans', sans-serif;font-size:13px;font-weight:400;font-style:normal;line-height:1;letter-spacing:0px;color:#444;transform-origin:0 0;transform:scale(1.1250,1.0000)">U</div>
<div style="position:absolute;left:277.00px;top:107.40px;white-space:pre;font-family:'Liberation Sans', sans-serif;font-size:15px;font-weight:400;font-style:normal;line-height:1;letter-spacing:0px;color:#333;transform-origin:0 0;transform:scale(1.0000,1.2000)">A</div>
<div style="position:absolute;left:700.67px;top:107.80px;white-space:pre;font-family:'Liberation Sans', sans-serif;font-size:15px;font-weight:400;font-style:normal;line-height:1;letter-spacing:0px;color:#9a9a9a;transform-origin:0 0;transform:scale(1.3333,1.4000)">%</div>
<div style="position:absolute;left:1188.00px;top:70.33px;white-space:pre;font-family:'Liberation Sans', sans-serif;font-size:13px;font-weight:400;font-style:normal;line-height:1;letter-spacing:0px;color:#b0b0b0;transform-origin:0 0;transform:scale(1.1111,1.3333)">A</div>
<div style="position:absolute;left:1188.00px;top:85.56px;white-space:pre;font-family:'Liberation Sans', sans-serif;font-size:13px;font-weight:400;font-style:normal;line-height:1;letter-spacing:0px;color:#b0b0b0;transform-origin:0 0;transform:scale(1.2500,1.2222)">Z</div>
<div style="position:absolute;left:222.00px;top:180.00px;white-space:pre;font-family:'Liberation Serif', serif;font-size:14px;font-weight:700;font-style:italic;line-height:1;letter-spacing:0px;color:#6e6e6e;transform-origin:0 0;transform:scale(1.1667,1.0000)">f</div>
<div style="position:absolute;left:227.00px;top:182.40px;white-space:pre;font-family:'Liberation Serif', serif;font-size:10px;font-weight:700;font-style:italic;line-height:1;letter-spacing:0px;color:#6e6e6e;transform-origin:0 0;transform:scale(1.6000,1.2000)">x</div>
<svg style="position:absolute;left:0px;top:0px" width="180" height="34" viewBox="0 0 180 34">
<g fill="none" stroke="#fff" stroke-width="1.2">
<path d="M21.5 10.5 H36.5 V25.5 H24 L21.5 23 Z"/>
<path d="M24.5 10.5 V16.5 H33.5 V10.5"/>
<path d="M25.5 25.5 V20.5 H32.5 V25.5"/>
<path d="M51.6 10 V16.6 H58"/>
<path d="M51.8 16.4 L56.5 11.8 A4.6 4.6 0 0 1 63.4 18.2 L56.3 25.6"/>
<g opacity="0.35"><path d="M99.4 10 V16.6 H93"/>
<path d="M99.2 16.4 L94.5 11.8 A4.6 4.6 0 0 0 87.6 18.2 L94.7 25.6"/></g>
</g>
<g fill="#fff">
<polygon points="70,15 75.2,15 72.6,18"/>
<polygon points="105,15 110.2,15 107.6,18" opacity="0.35"/>
<polygon points="137.8,15 143.2,15 140.5,18"/>
<rect x="159" y="14" width="5.2" height="1.2"/>
<polygon points="159,17 164.2,17 161.6,20"/>
</g>
<g fill="none" stroke="#fff" stroke-width="1.1">
<path d="M120 17.5 A4.6 4.6 0 1 1 127.8 15.5"/>
<path d="M122.3 21 V13.2 A1 1 0 0 1 124.3 13.2 V18 H126 A1.5 1.5 0 0 1 128.8 19 V22.5 A3 3 0 0 1 125.8 25.5 H123.5 L119.8 21.8 A1 1 0 0 1 121.5 20.2 Z"/>
</g>
</svg>
<svg style="position:absolute;left:1190px;top:0px" width="176" height="34" viewBox="0 0 176 34">
<g fill="none" stroke="#fff" stroke-width="1">
<rect x="8.5" y="11.5" width="12" height="9"/>
<line x1="8.5" y1="13.5" x2="20.5" y2="13.5"/>
<path d="M14.5 20.5 V15.5 M12.5 17.5 L14.5 15.5 L16.5 17.5"/>
<line x1="56" y1="16.5" x2="66" y2="16.5"/>
<rect x="102.5" y="13.5" width="7" height="7"/>
<path d="M104.5 13.5 V11.5 H111.5 V18.5 H109.5"/>
<path d="M148 11 L158 21 M158 11 L148 21"/>
</g></svg>
<svg style="position:absolute;left:0px;top:64px" width="97" height="80" viewBox="0 0 97 80">
<rect x="21" y="12.5" width="19.5" height="23" fill="#ebebeb" stroke="#c6c6c6" stroke-width="2"/>
<path d="M24.5 15.5 V10.5 H28 A3 3 0 0 1 33.5 10.5 H36.5 V15.5 Z" fill="#ebebeb" stroke="#c6c6c6" stroke-width="1.2"/>
<rect x="33.8" y="20.8" width="12.5" height="16.5" fill="#efefef" stroke="#9e9e9e" stroke-width="1.4"/>
<polygon points="31.3,61.2 35.8,61.2 33.5,63.6" fill="#bfbfbf"/>
<g stroke="#444" stroke-width="1" fill="none">
<path d="M63.5 7.5 L68.5 19 M68.8 7.5 L63.6 19"/>
</g>
<g stroke="#2b88d8" stroke-width="1.3" fill="none">
<circle cx="62.8" cy="20.8" r="1.8"/><circle cx="69.2" cy="20.8" r="1.8"/>
</g>
<g stroke="#262626" stroke-width="1.2" fill="none">
<path d="M65 44.3 H58.8 V31.5 H65 L66.5 33"/>
<path d="M64.8 46.5 V34.5 H70 L73.4 38 V46.5 Z" fill="#fff"/>
<path d="M69.5 34.5 V38.5 H73.4"/>
<path d="M66.8 41 H71.2 M66.8 43.3 H71.2"/>
</g>
<polygon points="80,38 85.2,38 82.6,41" fill="#444"/>
<path d="M68 61 L73.5 55.5" stroke="#b8b8b8" stroke-width="2.2"/>
<path d="M64.5 59.5 L69.5 64.5 L67 67 L62 62 Z" fill="#d0d0d0" stroke="#b0b0b0" stroke-width="1"/>
<path d="M62 62 L67 67 L65 70 C62 68.5 60 66 58.8 63.8 Z" fill="#dcdcdc" stroke="#b0b0b0" stroke-width="1"/>
<polygon points="86,86 93,86 93,93 86,93" fill="none"/>
</svg>
<svg style="position:absolute;left:86px;top:150px" width="8" height="8" viewBox="0 0 8 8"><g stroke="#a6a6a6" stroke-width="1" fill="none"><path d="M0.5 6 V0.5 H6"/><path d="M2.5 2.5 L7 7 M7 3.5 V7 H3.5"/></g></svg>
<svg style="position:absolute;left:343px;top:150px" width="8" height="8" viewBox="0 0 8 8"><g stroke="#a6a6a6" stroke-width="1" fill="none"><path d="M0.5 6 V0.5 H6"/><path d="M2.5 2.5 L7 7 M7 3.5 V7 H3.5"/></g></svg>
<svg style="position:absolute;left:645px;top:150px" width="8" height="8" viewBox="0 0 8 8"><g stroke="#a6a6a6" stroke-width="1" fill="none"><path d="M0.5 6 V0.5 H6"/><path d="M2.5 2.5 L7 7 M7 3.5 V7 H3.5"/></g></svg>
<svg style="position:absolute;left:792px;top:150px" width="8" height="8" viewBox="0 0 8 8"><g stroke="#a6a6a6" stroke-width="1" fill="none"><path d="M0.5 6 V0.5 H6"/><path d="M2.5 2.5 L7 7 M7 3.5 V7 H3.5"/></g></svg>
<svg style="position:absolute;left:253px;top:86px" width="8" height="5" viewBox="0 0 8 5"><polygon points="0,0 5.2,0 2.6,3" fill="#555"/></svg>
<svg style="position:absolute;left:293px;top:86px" width="8" height="5" viewBox="0 0 8 5"><polygon points="0,0 5.2,0 2.6,3" fill="#555"/></svg>
<svg style="position:absolute;left:316px;top:78px" width="30" height="8" viewBox="0 0 30 8"><g fill="none" stroke="#2b88d8" stroke-width="1.3"><path d="M1.5 5 L4 2.3 L6.5 5"/><path d="M23.5 2.5 L26 5.2 L28.5 2.5"/></g></svg>
<svg style="position:absolute;left:175px;top:118px" width="8" height="5" viewBox="0 0 8 5"><polygon points="0,0 5.2,0 2.6,3" fill="#444"/></svg>
<svg style="position:absolute;left:195px;top:110px" width="18" height="17" viewBox="0 0 18 17"><g fill="none" stroke="#c4c4c4" stroke-width="1" stroke-dasharray="1.5,1.2"><rect x="1.5" y="1.5" width="14" height="13"/><path d="M8.5 1.5 V14.5 M1.5 8 H15.5"/></g><rect x="1" y="14.8" width="15" height="1.2" fill="#a8a8a8"/></svg>
<svg style="position:absolute;left:218px;top:118px" width="8" height="5" viewBox="0 0 8 5"><polygon points="0.5,0 5.7,0 3.1,3" fill="#c4c4c4"/></svg>
<svg style="position:absolute;left:238px;top:108px" width="22" height="20" viewBox="0 0 22 20"><path d="M3.7 10 L9.2 4 L14.8 9.5 L9.2 14.5 Z" fill="#f6f6f6" stroke="#a8a8a8" stroke-width="1.1"/>
<path d="M9.2 7 V2.5 A1.2 1.2 0 0 1 11.6 2.5 V5" fill="none" stroke="#a8a8a8" stroke-width="1"/>
<path d="M15 8.5 C17 9.5 17.5 11.5 17 13.5" fill="none" stroke="#a8a8a8" stroke-width="1.5"/>
<rect x="2" y="15" width="15" height="3.5" fill="#b4b2b0"/></svg>
<svg style="position:absolute;left:262px;top:118px" width="8" height="5" viewBox="0 0 8 5"><polygon points="0,0 5.2,0 2.6,3" fill="#c4c4c4"/></svg>
<svg style="position:absolute;left:295px;top:118px" width="8" height="5" viewBox="0 0 8 5"><polygon points="0,0 5.2,0 2.6,3" fill="#444"/></svg>
<svg style="position:absolute;left:318px;top:110px" width="14" height="18" viewBox="0 0 14 18"><g fill="none" stroke="#b4b4b4" stroke-width="1"><path d="M3 1.5 H9.5 L8 4 M6.5 2.5 V5 L4.5 7.5"/>
</g><g fill="#b4b4b4"><rect x="2" y="10" width="10" height="1"/><rect x="3" y="12" width="8" height="1"/><rect x="3" y="14" width="8" height="1"/><rect x="2" y="16.5" width="10" height="1"/></g></svg>
<svg style="position:absolute;left:338px;top:118px" width="8" height="5" viewBox="0 0 8 5"><polygon points="0,0 5.2,0 2.6,3" fill="#444"/></svg>
<svg style="position:absolute;left:0;top:0" width="700" height="170"><rect x="367" y="79" width="14" height="1.1" fill="#8c8c8c"/><rect x="369.5" y="83" width="9.0" height="1.1" fill="#8c8c8c"/><rect x="367" y="87" width="14" height="1.1" fill="#8c8c8c"/><rect x="389" y="82" width="14" height="1.1" fill="#8c8c8c"/><rect x="391.5" y="86" width="9.0" height="1.1" fill="#8c8c8c"/><rect x="389" y="90" width="14" height="1.1" fill="#8c8c8c"/><rect x="411" y="86" width="14" height="1.1" fill="#8c8c8c"/><rect x="413.5" y="90" width="9.0" height="1.1" fill="#8c8c8c"/><rect x="411" y="94" width="14" height="1.1" fill="#8c8c8c"/><rect x="367" y="112" width="14" height="1.1" fill="#8c8c8c"/><rect x="367" y="116" width="10" height="1.1" fill="#8c8c8c"/><rect x="367" y="120" width="14" height="1.1" fill="#8c8c8c"/><rect x="367" y="124" width="10" height="1.1" fill="#8c8c8c"/><rect x="389" y="112" width="14" height="1.1" fill="#8c8c8c"/><rect x="391.5" y="116" width="9.0" height="1.1" fill="#8c8c8c"/><rect x="389" y="120" width="14" height="1.1" fill="#8c8c8c"/><rect x="391.5" y="124" width="9.0" height="1.1" fill="#8c8c8c"/><rect x="411" y="112" width="14" height="1.1" fill="#8c8c8c"/><rect x="415" y="116" width="10" height="1.1" fill="#8c8c8c"/><rect x="411" y="120" width="14" height="1.1" fill="#8c8c8c"/><rect x="415" y="124" width="10" height="1.1" fill="#8c8c8c"/><rect x="442" y="112" width="14" height="1.1" fill="#8c8c8c"/><rect x="451" y="116" width="5" height="1.1" fill="#8c8c8c"/><rect x="451" y="120" width="5" height="1.1" fill="#8c8c8c"/><rect x="442" y="124" width="14" height="1.1" fill="#8c8c8c"/><rect x="464" y="112" width="14" height="1.1" fill="#8c8c8c"/><rect x="473" y="116" width="5" height="1.1" fill="#8c8c8c"/><rect x="473" y="120" width="5" height="1.1" fill="#8c8c8c"/><rect x="464" y="124" width="14" height="1.1" fill="#8c8c8c"/></svg>
<svg style="position:absolute;left:440px;top:76px" width="50" height="60" viewBox="0 0 50 60"><g fill="none" stroke="#8c8c8c" stroke-width="1">
</g><g fill="none" stroke="#b0b0b0" stroke-width="1">
<path d="M5.5 39.5 L2.5 42.5 L5.5 45.5 M2.5 42.5 H9"/>
<path d="M28 39.5 L31 42.5 L28 45.5 M24.5 42.5 H31"/></g><g fill="none" stroke="#8c8c8c" stroke-width="1">
<path d="M6 18.5 L18 6.5 M13.5 6.5 H18 V11"/>
</g>
<text x="0" y="0" font-size="10.5" fill="#8c8c8c" font-family="Liberation Sans" transform="translate(4.5,16) rotate(-45)">ab</text>
<polygon points="21,10 26,10 23.5,13" fill="#c8c8c8"/></svg>
<svg style="position:absolute;left:492px;top:76px" width="22" height="54" viewBox="0 0 22 54"><text x="3" y="9" font-size="9.5" fill="#a6a6a6" font-family="Liberation Sans">ab</text>
<text x="3" y="18" font-size="9.5" fill="#a6a6a6" font-family="Liberation Sans">c</text>
<path d="M10.5 14.5 L13 12 M10.5 14.5 L13 17 M10.5 14.5 H15 A2.5 2.5 0 0 0 15 9.5" fill="none" stroke="#a6a6a6" stroke-width="1"/>
<g fill="none" stroke="#a6a6a6" stroke-width="1.2"><rect x="2.5" y="35.5" width="14" height="14"/></g>
<g fill="none" stroke="#a6a6a6" stroke-width="1"><path d="M2.5 38.5 H16.5 M9.5 35.5 V38.5 M2.5 46.5 H16.5 M9.5 46.5 V49.5 M4.5 42.5 H14.5 M6.5 40.5 L4.5 42.5 L6.5 44.5 M12.5 40.5 L14.5 42.5 L12.5 44.5"/></g></svg>
<svg style="position:absolute;left:640px;top:118px" width="8" height="5" viewBox="0 0 8 5"><polygon points="0,0 5.2,0 2.6,3" fill="#c4c4c4"/></svg>
<svg style="position:absolute;left:787px;top:86px" width="8" height="5" viewBox="0 0 8 5"><polygon points="0.5,0 5.7,0 3.1,3" fill="#bdbdbd"/></svg>
<svg style="position:absolute;left:666px;top:112px" width="22" height="17" viewBox="0 0 22 17"><rect x="2.5" y="2.5" width="15" height="9" fill="none" stroke="#9a9a9a" stroke-width="1.2"/>
<path d="M7 5 H5 V9 H7 M9 5 H11" fill="none" stroke="#9a9a9a" stroke-width="1.1"/>
<g fill="#ebebeb" stroke="#b0b0b0" stroke-width="1"><path d="M10.5 7 H17.5 V13.5 A3.5 1.5 0 0 1 10.5 13.5 Z"/><ellipse cx="14" cy="7" rx="3.5" ry="1.5"/></g>
<path d="M10.5 10 A3.5 1.5 0 0 0 17.5 10" fill="none" stroke="#b0b0b0"/></svg>
<svg style="position:absolute;left:690px;top:118px" width="8" height="5" viewBox="0 0 8 5"><polygon points="0,0 5.2,0 2.6,3" fill="#c4c4c4"/></svg>
<svg style="position:absolute;left:726px;top:111px" width="12" height="16" viewBox="0 0 12 16"><path d="M5.5 2.5 A2.6 2.6 0 1 1 8.5 7 C8.5 10 6.5 12.5 3.5 14 L3 13 C5 11.5 5.8 10 5.5 8 A2.6 2.6 0 0 1 5.5 2.5 Z" fill="#8a8a8a"/></svg>
<svg style="position:absolute;left:752px;top:110px" width="44" height="18" viewBox="0 0 44 18"><g fill="none" stroke="#b4b4b4" stroke-width="1"><path d="M3 5.5 H10 M6 2.5 L3 5.5 L6 8.5"/><path d="M25 13.5 H32 M29 10.5 L32 13.5 L29 16.5"/></g>
<g fill="#b4b4b4" font-family="Liberation Sans" font-size="8"><text x="10.5" y="9">0</text><text x="3" y="16">.00</text><text x="27" y="9">.00</text><text x="33" y="16">0</text></g></svg>
<svg style="position:absolute;left:823px;top:75px" width="36" height="30" viewBox="0 0 36 30"><rect x="0.5" y="0.5" width="27" height="21" fill="#f0f0f0" stroke="#9a9a9a" stroke-width="1.1"/><rect x="5.5" y="0.5" width="12.0" height="7.0" fill="#d0d0d0" stroke="#9a9a9a" stroke-width="1"/><rect x="5.5" y="7.5" width="8.0" height="7.0" fill="#d0d0d0" stroke="#9a9a9a" stroke-width="1"/><rect x="5.5" y="14.5" width="14.0" height="7.0" fill="#d0d0d0" stroke="#9a9a9a" stroke-width="1"/><g stroke="#9a9a9a" stroke-width="1"><path d="M5.5 0.5 V21.5"/><path d="M22.5 0.5 V21.5"/><path d="M0.5 7.5 H27.5"/><path d="M0.5 14.5 H27.5"/></g><rect x="0.5" y="0.5" width="27" height="21" fill="none" stroke="#9a9a9a" stroke-width="1.1"/></svg>
<svg style="position:absolute;left:882px;top:75px" width="36" height="30" viewBox="0 0 36 30"><rect x="0.5" y="0.5" width="27" height="21" fill="#f0f0f0" stroke="#9a9a9a" stroke-width="1.1"/><rect x="9.5" y="7.5" width="18.0" height="14.0" fill="#d0d0d0" stroke="#9a9a9a" stroke-width="1"/><g stroke="#9a9a9a" stroke-width="1"><path d="M9.5 0.5 V21.5"/><path d="M18.5 0.5 V21.5"/><path d="M0.5 7.5 H27.5"/><path d="M0.5 14.5 H27.5"/></g><rect x="0.5" y="0.5" width="27" height="21" fill="none" stroke="#9a9a9a" stroke-width="1.1"/><path d="M29.5 7.5 L16 20" stroke="#9a9a9a" stroke-width="4" stroke-linecap="round"/><path d="M29.3 7.7 L16.2 19.8" stroke="#f4f4f4" stroke-width="2" stroke-linecap="round"/><path d="M17.5 19.5 C15 17.5 11.5 19 10.5 22 C10 24 8.5 25.5 6.5 26.2 C10.5 27 15 26 17 23 Z" fill="#b4b4b4"/></svg>
<svg style="position:absolute;left:942px;top:75px" width="36" height="30" viewBox="0 0 36 30"><rect x="0.5" y="0.5" width="27" height="21" fill="#f0f0f0" stroke="#9a9a9a" stroke-width="1.1"/><rect x="5.5" y="5.5" width="17.0" height="11.0" fill="#d0d0d0" stroke="#9a9a9a" stroke-width="1"/><g stroke="#9a9a9a" stroke-width="1"><path d="M5.5 0.5 V21.5"/><path d="M22.5 0.5 V21.5"/><path d="M0.5 5.5 H27.5"/><path d="M0.5 16.5 H27.5"/></g><rect x="0.5" y="0.5" width="27" height="21" fill="none" stroke="#9a9a9a" stroke-width="1.1"/><path d="M29.5 7.5 L16 20" stroke="#9a9a9a" stroke-width="4" stroke-linecap="round"/><path d="M29.3 7.7 L16.2 19.8" stroke="#f4f4f4" stroke-width="2" stroke-linecap="round"/><path d="M17.5 19.5 C15 17.5 11.5 19 10.5 22 C10 24 8.5 25.5 6.5 26.2 C10.5 27 15 26 17 23 Z" fill="#b4b4b4"/></svg>
<svg style="position:absolute;left:850px;top:126px" width="8" height="5" viewBox="0 0 8 5"><polygon points="0,0 5.2,0 2.6,3" fill="#c4c4c4"/></svg>
<svg style="position:absolute;left:918px;top:126px" width="8" height="5" viewBox="0 0 8 5"><polygon points="0,0 5.2,0 2.6,3" fill="#c4c4c4"/></svg>
<svg style="position:absolute;left:974px;top:126px" width="8" height="5" viewBox="0 0 8 5"><polygon points="0,0 5.2,0 2.6,3" fill="#c4c4c4"/></svg>
<svg style="position:absolute;left:1000px;top:73px" width="40" height="26" viewBox="0 0 40 26"><rect x="4.5" y="2.5" width="27.5" height="21.5" fill="#f0f0f0" stroke="#9a9a9a" stroke-width="1.1"/>
<path d="M13.5 2.5 V24 M22.5 2.5 V24 M4.5 9.3 H32 M4.5 16.3 H32" stroke="#9a9a9a" stroke-width="1"/>
<rect x="3" y="9.8" width="3" height="6" fill="#f3f2f1"/>
<rect x="9.5" y="9.3" width="24.5" height="7" fill="#d0d0d0" stroke="#9a9a9a" stroke-width="1"/>
<path d="M22.5 9.3 V16.3" stroke="#9a9a9a"/>
<path d="M2.5 12.8 H15 M9 6.5 L2.5 12.8 L9 19" fill="none" stroke="#a8a8a8" stroke-width="1.2"/></svg>
<svg style="position:absolute;left:1044px;top:73px" width="36" height="26" viewBox="0 0 36 26"><rect x="2.5" y="2.5" width="27.5" height="21.5" fill="#f0f0f0" stroke="#9a9a9a" stroke-width="1.1"/>
<path d="M11.5 2.5 V24 M20.5 2.5 V24 M2.5 9.3 H30 M2.5 16.3 H30" stroke="#9a9a9a" stroke-width="1"/>
<rect x="1" y="9.8" width="3" height="6" fill="#f3f2f1"/>
<path d="M6.5 9.3 H19 L22.5 12.8 L19 16.3 H6.5 Z" fill="#d0d0d0" stroke="#9a9a9a" stroke-width="1"/>
<rect x="27" y="9.8" width="4" height="6" fill="#f3f2f1"/>
<path d="M20 7.5 L31 19 M31 7.5 L20 19" stroke="#a8a8a8" stroke-width="1.2"/></svg>
<svg style="position:absolute;left:1086px;top:68px" width="32" height="32" viewBox="0 0 32 32"><rect x="2.5" y="7.5" width="27.5" height="21.5" fill="#ffffff" stroke="#333" stroke-width="1.6"/>
<path d="M9.6 7.5 V29 M22.6 7.5 V29 M2.5 14.3 H30 M2.5 21.3 H30" stroke="#555" stroke-width="1"/>
<rect x="9.6" y="14.3" width="13" height="7" fill="#90c3ee" stroke="#2b79c2" stroke-width="1.6"/>
<path d="M8.2 2 V6 M8.2 3.8 H23.8 M23.8 2 V6" stroke="#2b88d8" stroke-width="1.2" fill="none"/></svg>
<svg style="position:absolute;left:1016px;top:126px" width="8" height="5" viewBox="0 0 8 5"><polygon points="0,0 5.2,0 2.6,3" fill="#c4c4c4"/></svg>
<svg style="position:absolute;left:1058px;top:126px" width="8" height="5" viewBox="0 0 8 5"><polygon points="0,0 5.2,0 2.6,3" fill="#c4c4c4"/></svg>
<svg style="position:absolute;left:1099px;top:126px" width="8" height="5" viewBox="0 0 8 5"><polygon points="0.5,0 5.7,0 3.1,3" fill="#333"/></svg>
<svg style="position:absolute;left:1140px;top:68px" width="32" height="20" viewBox="0 0 32 20"><path d="M15.8 3.6 H4.6 L10.8 10 L4.6 16.4 H16.2" fill="none" stroke="#333" stroke-width="1.3" stroke-linejoin="miter"/></svg>
<svg style="position:absolute;left:1164px;top:77px" width="8" height="5" viewBox="0 0 8 5"><polygon points="0,0 5.2,0 2.6,3" fill="#444"/></svg>
<svg style="position:absolute;left:1140px;top:92px" width="20" height="18" viewBox="0 0 20 18"><rect x="2.8" y="2.5" width="15" height="13.2" fill="#f0f0f0" stroke="#a8a8a8" stroke-width="1.1"/><path d="M2.8 4.8 H17.8" stroke="#a8a8a8" stroke-width="1"/><path d="M10.3 7 V13.5 M7.5 10.8 L10.3 13.5 L13.1 10.8" fill="none" stroke="#a8a8a8" stroke-width="1"/></svg>
<svg style="position:absolute;left:1162px;top:101px" width="8" height="5" viewBox="0 0 8 5"><polygon points="0,0 5.2,0 2.6,3" fill="#c4c4c4"/></svg>
<svg style="position:absolute;left:1140px;top:114px" width="20" height="19" viewBox="0 0 20 19"><path d="M2.3 12.1 L11.4 2.5 L17.2 7.8 L7.5 17.4 Z" fill="#fafafa" stroke="#a23ac4" stroke-width="1.3"/><path d="M2.3 12.1 L5.4 8.9 L11 14.2 L7.5 17.4 Z" fill="#c77ddc" stroke="#a23ac4" stroke-width="1.1"/></svg>
<svg style="position:absolute;left:1162px;top:123px" width="8" height="5" viewBox="0 0 8 5"><polygon points="0,0 5.2,0 2.6,3" fill="#444"/></svg>
<svg style="position:absolute;left:1196px;top:76px" width="24" height="22" viewBox="0 0 24 22"><path d="M4.5 3.5 H19.5 L14 10.5 V18.5 H10 V10.5 Z" fill="#f0f0f0" stroke="#a8a8a8" stroke-width="1.3"/></svg>
<svg style="position:absolute;left:1221px;top:126px" width="8" height="5" viewBox="0 0 8 5"><polygon points="0,0 5.2,0 2.6,3" fill="#c4c4c4"/></svg>
<svg style="position:absolute;left:1234px;top:69px" width="36" height="36" viewBox="0 0 36 36"><circle cx="23" cy="11" r="9.7" fill="#fafafa" stroke="#333" stroke-width="1.4"/><path d="M16 18 L4 31" stroke="#333" stroke-width="1.4"/></svg>
<svg style="position:absolute;left:1263px;top:126px" width="8" height="5" viewBox="0 0 8 5"><polygon points="0,0 5.2,0 2.6,3" fill="#444"/></svg>
<svg style="position:absolute;left:1344px;top:148px" width="14" height="10" viewBox="0 0 14 10"><path d="M2.5 8 L7 3.5 L11.5 8" fill="none" stroke="#555" stroke-width="1.6"/></svg>
<svg style="position:absolute;left:1216px;top:40px" width="20" height="18" viewBox="0 0 20 18"><path d="M4.3 7.5 V14.5 H15.3 V11.5" fill="none" stroke="#217346" stroke-width="1.1"/><path d="M6.8 12.5 C7 9 9.5 7.3 12.5 7.3 V5 L16 8.3 L12.5 11.5 V9.3 C10 9.3 8.2 10.5 6.8 12.5 Z" fill="none" stroke="#217346" stroke-width="1"/></svg>
<svg style="position:absolute;left:1286px;top:40px" width="16" height="18" viewBox="0 0 16 18"><path d="M2.3 4.3 H13.5 V10.8 H6.3 L3.8 13.5 V10.8 H2.3 Z" fill="none" stroke="#217346" stroke-width="1.1"/></svg>
<svg style="position:absolute;left:790px;top:40px" width="20" height="20" viewBox="0 0 20 20"><circle cx="11.5" cy="7.5" r="4.8" fill="none" stroke="#444" stroke-width="1.2"/><path d="M8 11 L3.5 15.5" stroke="#444" stroke-width="1.3"/></svg>
<svg style="position:absolute;left:93px;top:185px" width="8" height="5" viewBox="0 0 8 5"><polygon points="0,0 7,0 3.5,4" fill="#666"/></svg>
<svg style="position:absolute;left:120px;top:181px" width="5" height="12" viewBox="0 0 5 12"><rect x="1" y="1" width="2" height="2" fill="#a0a0a0"/><rect x="1" y="5.5" width="2" height="2" fill="#a0a0a0"/><rect x="1" y="10" width="2" height="2" fill="#a0a0a0"/></svg>
<svg style="position:absolute;left:148px;top:180px" width="56" height="16" viewBox="0 0 56 16"><path d="M3 3 L13 12 M13 3 L3 12" stroke="#6e6e6e" stroke-width="1.6" fill="none"/><path d="M39 8 L43.5 12 L50.5 2.5" stroke="#6e6e6e" stroke-width="2.4" fill="none"/></svg>
<svg style="position:absolute;left:1346px;top:182px" width="14" height="12" viewBox="0 0 14 12"><path d="M3.5 3.5 L7 7 L10.5 3.5" stroke="#555" stroke-width="1.8" fill="none"/></svg>
<svg style="position:absolute;left:24px;top:684px" width="40" height="14" viewBox="0 0 40 14"><polygon points="7.5,4 3,7.5 7.5,11" fill="#c0c0c0"/><polygon points="32,4 36.5,7.5 32,11" fill="#c0c0c0"/></svg>
<svg style="position:absolute;left:204px;top:682px" width="20" height="20" viewBox="0 0 20 20"><circle cx="9.8" cy="9.8" r="8" fill="none" stroke="#6e6e6e" stroke-width="1.2"/><path d="M9.8 5.5 V14.1 M5.5 9.8 H14.1" stroke="#6e6e6e" stroke-width="2"/></svg>
<svg style="position:absolute;left:816px;top:686px" width="6" height="14" viewBox="0 0 6 14"><rect x="2" y="1.5" width="2" height="2" fill="#a0a0a0"/><rect x="2" y="5.5" width="2" height="2" fill="#a0a0a0"/><rect x="2" y="9.5" width="2" height="2" fill="#a0a0a0"/></svg>
<svg style="position:absolute;left:836px;top:685px" width="15" height="15" viewBox="0 0 15 15"><polygon points="9.5,4 5,7.5 9.5,11" fill="#6e6e6e"/></svg>
<svg style="position:absolute;left:1332px;top:685px" width="15" height="15" viewBox="0 0 15 15"><polygon points="5.5,4 10,7.5 5.5,11" fill="#6e6e6e"/></svg>
<svg style="position:absolute;left:1348px;top:215px" width="15" height="15" viewBox="0 0 15 15"><polygon points="3.5,9 11.5,9 7.5,5" fill="#6e6e6e"/></svg>
<svg style="position:absolute;left:1348px;top:664px" width="15" height="15" viewBox="0 0 15 15"><polygon points="3.5,6 11.5,6 7.5,10" fill="#6e6e6e"/></svg>
<svg style="position:absolute;left:72px;top:707px" width="20" height="20" viewBox="0 0 20 20"><circle cx="6" cy="5.2" r="3" fill="#555"/><path d="M4.5 8.5 V15.5 H15.5 V4.5 H10" fill="none" stroke="#555" stroke-width="1.2"/><rect x="10" y="4" width="6" height="2.5" fill="#555"/><g fill="#555"><rect x="6.5" y="9" width="2" height="1.2"/><rect x="9.5" y="9" width="2" height="1.2"/><rect x="12.5" y="9" width="2" height="1.2"/><rect x="6.5" y="12" width="2" height="1.2"/><rect x="9.5" y="12" width="2" height="1.2"/><rect x="12.5" y="12" width="2" height="1.2"/></g></svg>
<svg style="position:absolute;left:1080px;top:706px" width="290" height="22" viewBox="0 0 290 22"><g fill="none" stroke="#6e6e6e" stroke-width="1.2">
<rect x="6.5" y="4.5" width="12.5" height="12.5"/><path d="M10.7 4.5 V17 M14.9 4.5 V17 M6.5 8.7 H19 M6.5 12.9 H19"/>
<rect x="44.5" y="4.5" width="13" height="12.5"/><rect x="47.5" y="7.5" width="7" height="6.5"/>
<path d="M49 9.5 H53 M49 11.5 H53" stroke-width="0.9"/>
<rect x="82.5" y="4.5" width="13" height="12.5"/><path d="M82.5 12 H90.5 V4.5 M86.5 4.5 V10" />
</g>
<rect x="113" y="10.5" width="6" height="2" fill="#6e6e6e"/>
<rect x="123" y="10.8" width="100" height="1" fill="#a6a6a6"/>
<rect x="173" y="8" width="1" height="6" fill="#a6a6a6"/>
<path d="M226 11.5 H234 M230 7.5 V15.5" stroke="#6e6e6e" stroke-width="2"/></svg>
<div style="position:absolute;left:18px;top:321px;width:254px;height:189px;background:#ffffff;border:1px solid #c6c6c6;"></div>
<div style="position:absolute;left:19px;top:492px;width:254px;height:19px;background:#eeeeee;"></div>
<div style="position:absolute;left:31px;top:329px;font-size:16px;line-height:18px;color:#262626;font-family:'Liberation Sans', sans-serif">解除</div>
<div style="position:absolute;left:31px;top:357px;font-size:16px;line-height:18px;color:#262626;font-family:'Liberation Sans', sans-serif">か</div>
<div style="position:absolute;left:31px;top:385px;font-size:16px;line-height:18px;color:#262626;font-family:'Liberation Sans', sans-serif">管理</div>
<div style="position:absolute;left:31px;top:413px;font-size:16px;line-height:18px;color:#262626;font-family:'Liberation Sans', sans-serif">確認</div>
<div style="position:absolute;left:31px;top:441px;font-size:16px;line-height:18px;color:#262626;font-family:'Liberation Sans', sans-serif">株式会社</div>
<div style="position:absolute;left:27.00px;top:496.00px;white-space:pre;font-family:'Liberation Sans', sans-serif;font-size:12px;font-weight:400;font-style:normal;line-height:1;letter-spacing:0px;color:#262626;transform-origin:0 0;transform:scale(0.9085,0.9167)">Tab キーで予測候補を選択</div>
<div style="position:absolute;left:28px;top:514px;width:91px;height:25px;background:#ffffff;"></div>
<svg style="position:absolute;left:234px;top:329px" width="34" height="16" viewBox="0 0 34 16"><path d="M3 3 L12 12 M12 3 L3 12" stroke="#262626" stroke-width="1.3" fill="none"/><circle cx="27.5" cy="6" r="3.4" fill="none" stroke="#262626" stroke-width="1.3"/><path d="M25 8.7 L21 12.8" stroke="#262626" stroke-width="1.5"/></svg>
<svg style="position:absolute;left:136px;top:470px" width="20" height="14" viewBox="0 0 20 14"><path d="M2.5 3 L9.5 10 L16.5 3" stroke="#444" stroke-width="1.3" fill="none"/></svg>
<div style="position:absolute;left:27px;top:513px;width:89px;height:23px;border:2px solid #217346;z-index:0"></div>
<div style="position:absolute;left:115px;top:534px;width:5px;height:5px;background:#217346;"></div>
<div style="position:absolute;left:113px;top:532px;width:3px;height:3px;background:#ffffff;"></div>
<div style="position:absolute;left:20px;top:507px;width:93px;height:25px;border:7px solid #ff0000;border-radius:5px"></div>
<div style="position:absolute;left:133px;top:507px;width:39px;height:39px;border-radius:50%;background:#fff;box-shadow:0 1px 4px rgba(0,0,0,0.25)"></div>
<div style="position:absolute;left:134px;top:509px;width:33px;height:33px;border-radius:50%;border:1.5px solid #ff0000"></div>
<div style="position:absolute;left:138px;top:512px;width:25px;height:25px;border-radius:50%;border:2px solid rgba(0,0,0,0.08)"></div>
<div style="position:absolute;left:46px;top:515px;width:1px;height:22px;background:#000000;"></div>
<svg style="position:absolute;left:31px;top:531px" width="18" height="5" viewBox="0 0 18 5"><path d="M1 3 L2.5 1.5 L4 3 L5.5 1.5 L7 3 L8.5 1.5 L10 3 L11.5 1.5 L13 3 L14.5 1.5 L16 3" fill="none" stroke="#555" stroke-width="0.9"/></svg>
<div style="position:absolute;left:142.55px;top:512.80px;white-space:pre;font-family:'Liberation Sans', sans-serif;font-size:22px;font-weight:700;font-style:normal;line-height:1;letter-spacing:0px;color:#ff0000;transform-origin:0 0;transform:scale(1.4545,1.4000)">6</div>
<div style="position:absolute;left:31.00px;top:515.67px;white-space:pre;font-family:'Liberation Sans', sans-serif;font-size:14px;font-weight:400;font-style:normal;line-height:1;letter-spacing:0px;color:#262626;transform-origin:0 0;transform:scale(1.0000,1.1667)">か</div>
</body></html>
